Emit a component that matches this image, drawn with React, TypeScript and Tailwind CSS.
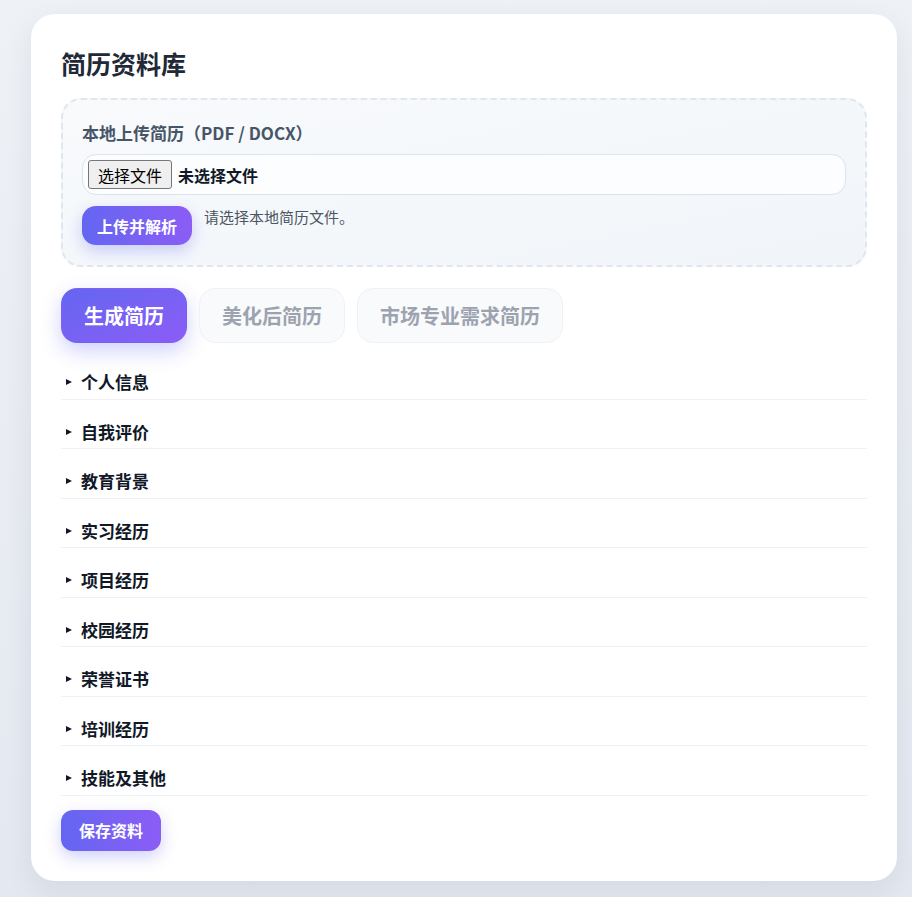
import { useState } from "react";

const sections = [
  "个人信息",
  "自我评价",
  "教育背景",
  "实习经历",
  "项目经历",
  "校园经历",
  "荣誉证书",
  "培训经历",
  "技能及其他",
];

const tabs = ["生成简历", "美化后简历", "市场专业需求简历"];

const App = () => {
  const [activeTab, setActiveTab] = useState(0);
  const [fileName, setFileName] = useState("");

  return (
    <div className="min-h-screen bg-gradient-to-b from-[#eef1f6] to-[#e4e8f0] pt-[14px] pb-4 pl-[31px] pr-[15px] font-['Noto_Sans_CJK_SC','Noto_Sans',sans-serif]">
      <div className="rounded-[24px] bg-white px-[30px] pt-[31px] pb-[30px] shadow-[0_10px_30px_rgba(30,41,59,0.08)]">
        <h1 className="mb-[17px] text-[25px] leading-9 font-bold text-[#1f2937]">
          简历资料库
        </h1>

        {/* upload box */}
        <div className="rounded-[20px] border-2 border-dashed border-[#e0e6ee] bg-gradient-to-br from-[#f8fafc] to-[#f1f5f9] px-[19px] pt-[20px] pb-[20px]">
          <div className="mb-[9px] text-[17px] leading-[25px] font-bold text-[#475569]">
            本地上传简历（PDF / DOCX）
          </div>
          <label className="flex h-[41px] cursor-pointer items-center gap-[6px] rounded-[14px] border border-[#dbe3ee] bg-[#fcfdfe] pl-[5px]">
            <span className="flex h-[29px] items-center rounded-[3px] border border-[#767676] bg-[#efefef] px-[9px] text-[16px] text-black">
              选择文件
            </span>
            <span className="text-[16px] font-bold text-[#111827]">
              {fileName || "未选择文件"}
            </span>
            <input
              type="file"
              accept=".pdf,.docx"
              className="hidden"
              onChange={(e) => setFileName(e.target.files?.[0]?.name ?? "")}
            />
          </label>
          <div className="mt-[11px] flex items-start gap-3">
            <button className="h-[39px] rounded-[14px] bg-gradient-to-r from-[#6366f1] to-[#8b5cf6] px-[15px] text-[16px] font-bold text-white shadow-[0_6px_16px_rgba(99,102,241,0.3)]">
              上传并解析
            </button>
            <p className="mt-px text-[15px] leading-5 text-[#4b5563]">
              请选择本地简历文件。
            </p>
          </div>
        </div>

        {/* tabs */}
        <div className="mt-[21px] flex gap-3">
          {tabs.map((tab, index) => (
            <button
              key={tab}
              onClick={() => setActiveTab(index)}
              className={
                index === activeTab
                  ? "h-[55px] rounded-[16px] border border-transparent bg-gradient-to-br from-[#6366f1] to-[#8b5cf6] px-[22px] text-[20px] font-bold text-white shadow-[0_8px_20px_rgba(99,102,241,0.3)]"
                  : "h-[55px] rounded-[16px] border border-[#eef2f7] bg-[#f8fafc] px-[22px] text-[20px] font-bold text-[#9ca3af]"
              }
            >
              {tab}
            </button>
          ))}
        </div>

        {/* sections */}
        <div className="mt-[7px]">
          {sections.map((name) => (
            <details
              key={name}
              className="border-b border-[#eef1f9] pt-5 pb-[4.5px]"
            >
              <summary className="flex cursor-pointer list-none items-center gap-[8px] pl-1 text-[17px] leading-6 font-bold text-[#111827] [&::-webkit-details-marker]:hidden">
                <svg width="8" height="8" viewBox="0 0 8 8" className="shrink-0">
                  <path d="M1 1 L7 4 L1 7 Z" fill="#111827" />
                </svg>
                {name}
              </summary>
            </details>
          ))}
        </div>

        <button className="mt-[14px] h-[41px] rounded-[12px] bg-gradient-to-r from-[#6366f1] to-[#8b5cf6] px-[18px] text-[16px] font-bold text-white shadow-[0_6px_16px_rgba(99,102,241,0.3)]">
          保存资料
        </button>
      </div>
    </div>
  );
};

export default App;
